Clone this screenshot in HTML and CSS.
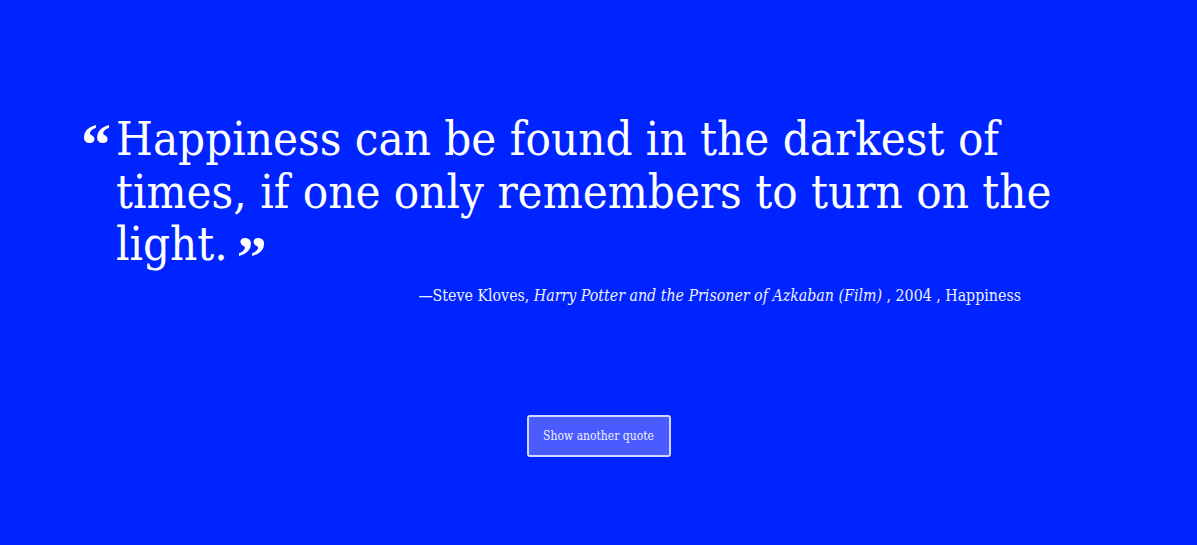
FILE: index.html
```html
<!DOCTYPE html>
<html lang="en">
<head>
<meta charset="utf-8">
<title>Random Quote</title>
<link rel="stylesheet" href="styles.css">
</head>
<body>
<main class="page">
  <figure class="quote-box">
    <blockquote class="quote">
      <span class="mark mark-open">“</span>
      <p class="quote-text">Happiness can be found in the darkest of times, if one only remembers to turn on the light.<span class="mark mark-close">”</span></p>
    </blockquote>
    <figcaption class="attribution">—Steve Kloves, <cite>Harry Potter and the Prisoner of Azkaban (Film)</cite> , 2004 , Happiness</figcaption>
  </figure>
  <div class="actions">
    <button class="btn" type="button">Show another quote</button>
  </div>
</main>
</body>
</html>
```
FILE: styles.css
```css
html, body {
  margin: 0;
  padding: 0;
}
body {
  background: #0024ff;
  color: #ffffff;
  font-family: "DejaVu Serif Condensed", "DejaVu Serif", "Liberation Serif", serif;
  font-stretch: condensed;
  height: 545px;
  overflow: hidden;
}
.page {
  display: flex;
  flex-direction: column;
  padding-top: 113px;
}
.quote-box {
  margin: 0 80px;
}
.quote {
  margin: 0;
  display: flex;
  align-items: flex-start;
}
.mark {
  font-family: "Liberation Serif", serif;
  font-stretch: normal;
  font-weight: bold;
  font-size: 60px;
}
.mark-open {
  width: 35px;
  flex: none;
  line-height: 1;
  padding-top: 2px;
  margin-left: 1px;
}
.mark-close {
  display: inline-block;
  line-height: 24px;
  height: 24px;
  vertical-align: baseline;
  position: relative;
  top: 17px;
  margin-left: 9px;
}
.quote-text {
  margin: 0;
  font-size: 47px;
  line-height: 52.5px;
  max-width: 1000px;
}
.attribution {
  margin-top: 15px;
  text-align: right;
  padding-right: 96px;
  font-size: 15.8px;
  color: #eef0ff;
}
.attribution cite {
  font-style: italic;
}
.actions {
  display: flex;
  justify-content: center;
  margin-top: 110px;
}
.btn {
  width: 144px;
  height: 42px;
  background: #4a5bff;
  border: 2px solid #d0d6ff;
  border-radius: 3px;
  color: #f0f2ff;
  font-family: "DejaVu Serif Condensed", "DejaVu Serif", serif;
  font-stretch: condensed;
  font-size: 12px;
  cursor: pointer;
}
```
